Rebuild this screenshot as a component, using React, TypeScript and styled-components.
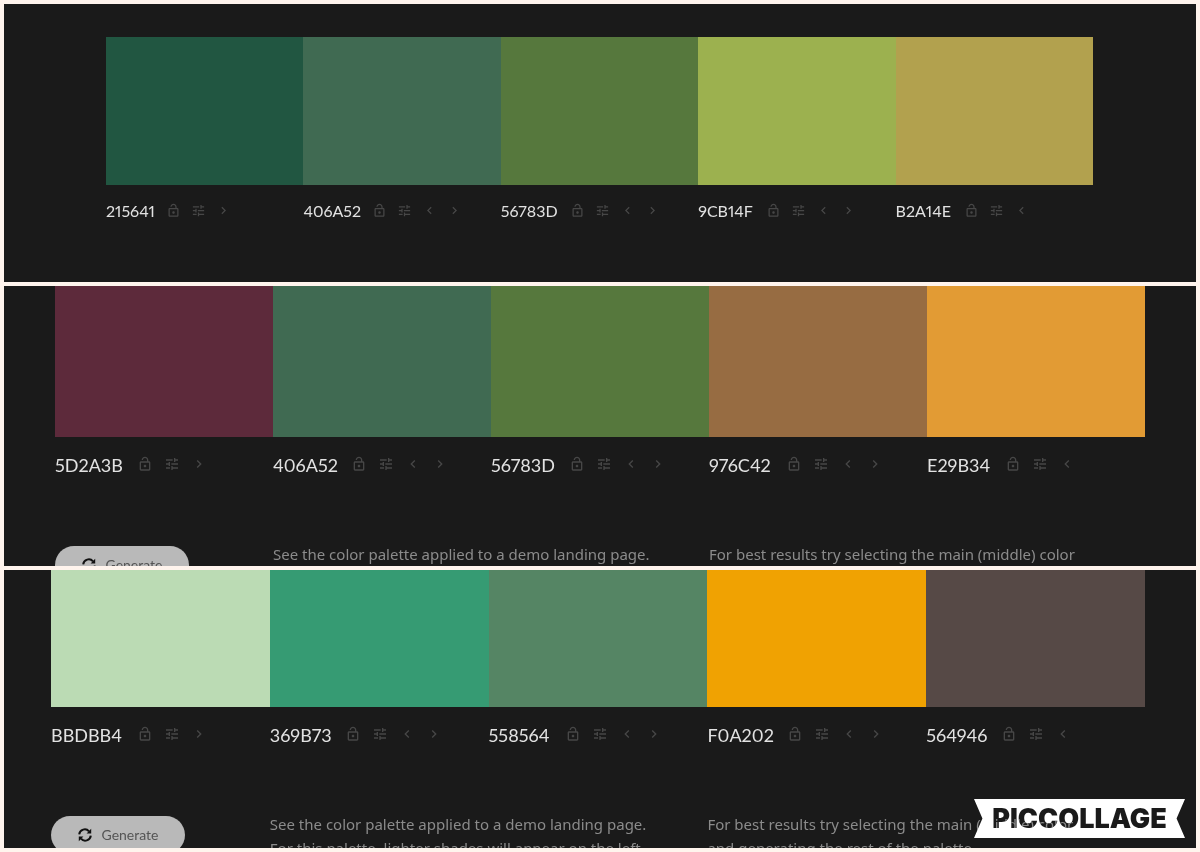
import React from "react";
import styled, { createGlobalStyle } from "styled-components";
import { MdChevronLeft, MdChevronRight, MdOutlineLockOpen, MdTune } from "react-icons/md";

const GlobalStyle = createGlobalStyle`
  *, *::before, *::after { box-sizing: border-box; }
  body { margin: 0; background: #fff4ed; }
  button { margin: 0; padding: 0; border: 0; background: none; cursor: pointer; }
`;

const Collage = styled.main`
  position: relative;
  display: grid;
  grid-template-rows: 278fr 280fr 278fr;
  gap: 4px;
  padding: 4px;
  height: 100vh;
`;

const Panel = styled.section<{ $pad: string }>`
  min-height: 0;
  overflow: hidden;
  padding: ${(p) => p.$pad};
  background: #1a1a1a;
`;

const Palette = styled.ul`
  display: grid;
  grid-template-columns: repeat(5, 1fr);
  margin: 0;
  padding: 0;
  list-style: none;
`;

const Swatch = styled.div<{ $color: string; $height: number }>`
  height: ${(p) => p.$height}px;
  background: ${(p) => p.$color};
`;

const Controls = styled.div<{ $large: boolean }>`
  display: flex;
  align-items: center;
  gap: ${(p) => (p.$large ? 11 : 10)}px;
  margin-top: ${(p) => (p.$large ? 15 : 13)}px;
  height: 24px;
`;

const Code = styled.span<{ $large: boolean; $width: number }>`
  width: ${(p) => p.$width}px;
  margin-right: ${(p) => (p.$large ? 4 : 2)}px;
  padding-top: 2px;
  color: #e2e2e2;
  font: 400 ${(p) => (p.$large ? 18 : 16)}px/24px Lato, sans-serif;
  font-variant-numeric: proportional-nums;
  white-space: nowrap;
`;

const IconButton = styled.button<{ $large: boolean }>`
  display: grid;
  place-items: center;
  color: #474747;

  svg {
    display: block;
    width: ${(p) => (p.$large ? 16 : 15)}px;
    height: ${(p) => (p.$large ? 16 : 15)}px;
  }
`;

const Footer = styled.div`
  display: grid;
  grid-template-columns: 1fr 2fr 2fr;
  align-items: start;
  margin-top: 65px;
`;

const GenerateButton = styled.button`
  display: flex;
  align-items: center;
  justify-content: center;
  gap: 10px;
  width: 134px;
  height: 38px;
  margin-top: 5px;
  border-radius: 19px;
  background: #b9b9b9;
  color: #555;
  font: 400 14px/20px Lato, sans-serif;

  svg {
    color: #111;
  }
`;

const Note = styled.p`
  margin: 0;
  padding-top: 1px;
  color: #8b8b8b;
  font: 400 15px/24px "Noto Sans", sans-serif;
  white-space: nowrap;
`;

const Ribbon = styled.div`
  position: absolute;
  right: 15px;
  bottom: 14px;
  width: 211px;
  height: 39px;
  background: #fff;
  color: #1a1a1a;
  clip-path: polygon(0 0, 100% 0, 96% 50%, 100% 100%, 0 100%, 4% 50%);
  font: 900 27px/40px Inter, sans-serif;
  text-align: center;
  mix-blend-mode: lighten;
`;

function SyncIcon() {
  return (
    <svg width="14" height="14" viewBox="0 0 14 14" fill="none" stroke="currentColor" strokeWidth="2" aria-hidden="true">
      <path d="M1.2 6.3a5.6 5.6 0 0 1 9.8-3M12.8 7.7a5.6 5.6 0 0 1-9.8 3" />
      <path d="M13.2.8v4.6H8.6zM.8 13.2V8.6h4.6z" fill="currentColor" stroke="none" />
    </svg>
  );
}

type Entry = { code: string; width: number };

type Scheme = {
  pad: string;
  large: boolean;
  height: number;
  colors: Entry[];
  notes?: string[][];
};

const schemes: Scheme[] = [
  {
    pad: "33px 103px 0 102px",
    large: false,
    height: 148,
    colors: [
      { code: "215641", width: 48 },
      { code: "406A52", width: 57 },
      { code: "56783D", width: 57 },
      { code: "9CB14F", width: 56 },
      { code: "B2A14E", width: 56 },
    ],
  },
  {
    pad: "0 51px",
    large: true,
    height: 151,
    colors: [
      { code: "5D2A3B", width: 67 },
      { code: "406A52", width: 63 },
      { code: "56783D", width: 63 },
      { code: "976C42", width: 62 },
      { code: "E29B34", width: 63 },
    ],
    notes: [["See the color palette applied to a demo landing page."], ["For best results try selecting the main (middle) color"]],
  },
  {
    pad: "0 51px 0 47px",
    large: true,
    height: 137,
    colors: [
      { code: "BBDBB4", width: 71 },
      { code: "369B73", width: 60 },
      { code: "558564", width: 61 },
      { code: "F0A202", width: 65 },
      { code: "564946", width: 60 },
    ],
    notes: [
      ["See the color palette applied to a demo landing page.", "For this palette, lighter shades will appear on the left"],
      ["For best results try selecting the main (middle) color", "and generating the rest of the palette."],
    ],
  },
];

function PalettePanel({ scheme }: { scheme: Scheme }) {
  const { large, colors, notes } = scheme;
  return (
    <Panel $pad={scheme.pad}>
      <Palette>
        {colors.map(({ code, width }, i) => (
          <li key={code}>
            <Swatch $color={`#${code}`} $height={scheme.height} />
            <Controls $large={large}>
              <Code $large={large} $width={width}>{code}</Code>
              <IconButton $large={large} aria-label={`Lock ${code}`}><MdOutlineLockOpen /></IconButton>
              <IconButton $large={large} aria-label={`Adjust ${code}`}><MdTune /></IconButton>
              {i > 0 && (
                <IconButton $large={large} aria-label={`Move ${code} left`}><MdChevronLeft /></IconButton>
              )}
              {i < colors.length - 1 && (
                <IconButton $large={large} aria-label={`Move ${code} right`}><MdChevronRight /></IconButton>
              )}
            </Controls>
          </li>
        ))}
      </Palette>
      {notes && (
        <Footer>
          <GenerateButton><SyncIcon />Generate</GenerateButton>
          {notes.map((lines) => (
            <Note key={lines[0]}>
              {lines.map((line, i) => (
                <React.Fragment key={line}>{i > 0 && <br />}{line}</React.Fragment>
              ))}
            </Note>
          ))}
        </Footer>
      )}
    </Panel>
  );
}

export default function App() {
  return (
    <>
      <GlobalStyle />
      <Collage>
        {schemes.map((scheme) => (
          <PalettePanel key={scheme.colors[0].code} scheme={scheme} />
        ))}
        <Ribbon>PICCOLLAGE</Ribbon>
      </Collage>
    </>
  );
}
